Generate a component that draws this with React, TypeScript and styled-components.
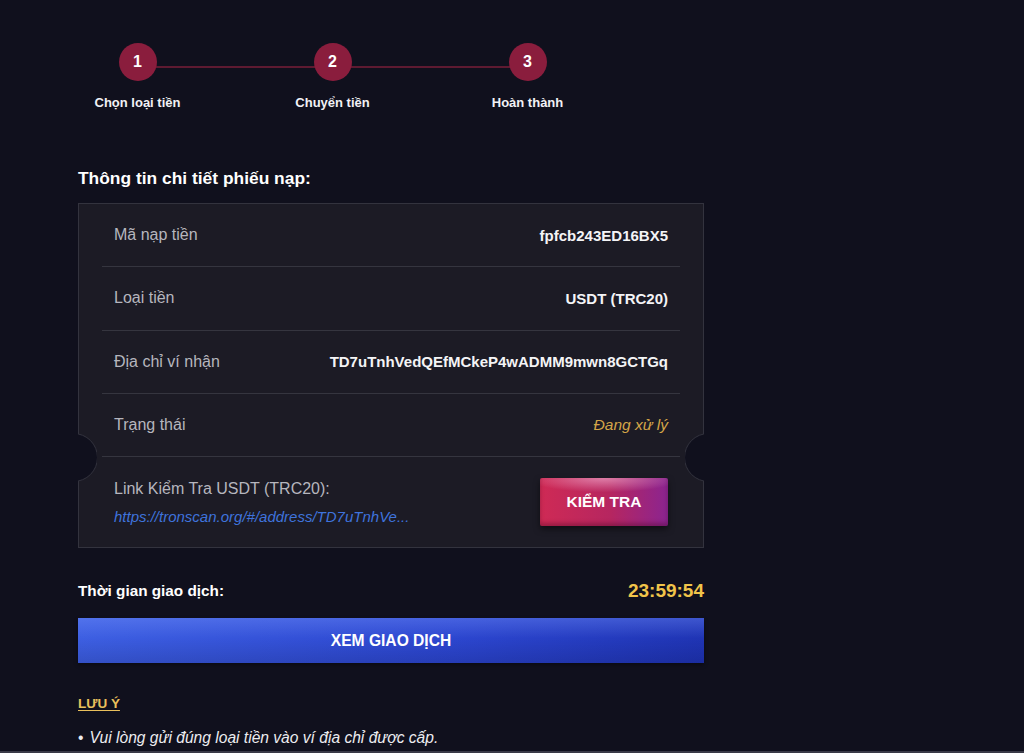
import styled, { createGlobalStyle } from "styled-components";

const GlobalStyle = createGlobalStyle`
  html, body {
    margin: 0;
    padding: 0;
    background: #10101d;
    color: #ffffff;
    font-family: "Liberation Sans", Arial, Helvetica, sans-serif;
  }
  * {
    box-sizing: border-box;
  }
`;

const Page = styled.div`
  min-height: 753px;
  padding: 43px 0 0 78px;
`;

const Column = styled.div`
  width: 626px;
`;

const Stepper = styled.div`
  display: grid;
  grid-template-columns: repeat(3, 195px);
  margin-left: -38px;
`;

const Step = styled.div<{ $last?: boolean }>`
  position: relative;
  display: flex;
  flex-direction: column;
  align-items: center;
  &::after {
    content: "";
    display: ${(p) => (p.$last ? "none" : "block")};
    position: absolute;
    top: 23px;
    left: 50%;
    width: 100%;
    height: 2px;
    background: #5e1a31;
  }
`;

const Circle = styled.div`
  position: relative;
  z-index: 1;
  width: 38px;
  height: 38px;
  border-radius: 50%;
  background: #8a1d3d;
  display: flex;
  align-items: center;
  justify-content: center;
  font-size: 16px;
  font-weight: 700;
`;

const StepLabel = styled.div`
  margin-top: 13px;
  font-size: 13px;
  line-height: 17px;
  font-weight: 700;
  color: #f2f2f5;
`;

const Title = styled.h2`
  margin: 56px 0 0;
  font-size: 17.4px;
  line-height: 23px;
  font-weight: 700;
`;

const Card = styled.div`
  position: relative;
  margin-top: 13px;
  padding: 0 23px;
  background: #1c1b25;
  border: 1px solid #33333e;
`;

const Row = styled.div<{ $tall?: boolean }>`
  display: flex;
  align-items: center;
  justify-content: space-between;
  height: ${(p) => (p.$tall ? "90px" : "63.3px")};
  padding: 0 12px;
  border-bottom: ${(p) => (p.$tall ? "none" : "1px solid #35353f")};
`;

const Label = styled.span`
  font-size: 16px;
  color: #b6b6be;
`;

const Value = styled.span<{ $status?: boolean }>`
  font-size: ${(p) => (p.$status ? "15.5px" : "15px")};
  font-weight: ${(p) => (p.$status ? 400 : 700)};
  font-style: ${(p) => (p.$status ? "italic" : "normal")};
  color: ${(p) => (p.$status ? "#d4a548" : "#f4f4f6")};
`;

const LinkBlock = styled.div`
  display: flex;
  flex-direction: column;
  gap: 10px;
`;

const LinkText = styled.a`
  font-size: 15px;
  font-style: italic;
  color: #3f73dc;
  text-decoration: none;
`;

const CheckButton = styled.button`
  width: 128px;
  height: 48px;
  border: none;
  border-radius: 2px;
  color: #fff;
  font-family: inherit;
  font-size: 15.5px;
  font-weight: 700;
  background:
    radial-gradient(ellipse 60% 30% at 50% 0%, rgba(255, 200, 230, 0.55), transparent 100%),
    linear-gradient(90deg, #cf2a55 0%, #b62660 55%, #8b2490 100%);
  box-shadow: 0 3px 6px rgba(0, 0, 0, 0.5), inset 0 -3px 4px rgba(60, 0, 30, 0.35);
`;

const Notch = styled.div<{ $side: "left" | "right" }>`
  position: absolute;
  top: 228px;
  ${(p) => p.$side}: -1px;
  width: 19px;
  height: 50px;
  overflow: hidden;
  &::before {
    content: "";
    position: absolute;
    top: 1px;
    ${(p) => p.$side}: -29px;
    width: 47px;
    height: 47px;
    border-radius: 50%;
    background: #10101d;
    border: 1px solid #33333e;
  }
`;

const TimerRow = styled.div`
  display: flex;
  justify-content: space-between;
  align-items: center;
  margin-top: 31px;
  height: 24px;
`;

const TimerLabel = styled.span`
  font-size: 15.3px;
  font-weight: 700;
`;

const Timer = styled.span`
  font-size: 19px;
  font-weight: 700;
  color: #f1c44a;
`;

const ViewButton = styled.button`
  display: block;
  width: 100%;
  height: 45px;
  margin-top: 15px;
  border: none;
  color: #fff;
  font-family: inherit;
  font-size: 15.6px;
  font-weight: 700;
  background:
    linear-gradient(180deg, rgba(120, 150, 255, 0.35) 0%, rgba(120, 150, 255, 0) 45%, rgba(0, 0, 40, 0.15) 100%),
    linear-gradient(90deg, #3d5fe2 0%, #2c46cf 60%, #1f34b4 100%);
  box-shadow: 0 2px 4px rgba(0, 0, 0, 0.4);
`;

const NoteTitle = styled.div`
  margin-top: 32px;
  font-size: 13.5px;
  line-height: 18px;
  font-weight: 700;
  color: #e9c05c;
  text-decoration: underline;
  text-underline-offset: 2px;
`;

const NoteList = styled.ul`
  margin: 15px 0 0;
  padding: 0;
  list-style: none;
`;

const NoteItem = styled.li`
  font-size: 15.6px;
  line-height: 20px;
  font-style: italic;
  color: #ececf0;
  &::before {
    content: "•";
    font-style: normal;
    margin-right: 6px;
  }
`;

const BottomBar = styled.div`
  position: fixed;
  left: 0;
  right: 0;
  bottom: 0;
  height: 2px;
  background: #3a3a47;
`;

const steps = ["Chọn loại tiền", "Chuyển tiền", "Hoàn thành"];

const details = [
  { label: "Mã nạp tiền", value: "fpfcb243ED16BX5" },
  { label: "Loại tiền", value: "USDT (TRC20)" },
  { label: "Địa chỉ ví nhận", value: "TD7uTnhVedQEfMCkeP4wADMM9mwn8GCTGq" },
];

export default function App() {
  return (
    <>
      <GlobalStyle />
      <Page>
        <Column>
          <Stepper>
            {steps.map((s, i) => (
              <Step key={s} $last={i === steps.length - 1}>
                <Circle>{i + 1}</Circle>
                <StepLabel>{s}</StepLabel>
              </Step>
            ))}
          </Stepper>

          <Title>Thông tin chi tiết phiếu nạp:</Title>

          <Card>
            {details.map((d) => (
              <Row key={d.label}>
                <Label>{d.label}</Label>
                <Value>{d.value}</Value>
              </Row>
            ))}
            <Row>
              <Label>Trạng thái</Label>
              <Value $status>Đang xử lý</Value>
            </Row>
            <Row $tall>
              <LinkBlock>
                <Label>Link Kiểm Tra USDT (TRC20):</Label>
                <LinkText href="#">https://tronscan.org/#/address/TD7uTnhVe...</LinkText>
              </LinkBlock>
              <CheckButton>KIỂM TRA</CheckButton>
            </Row>
            <Notch $side="left" />
            <Notch $side="right" />
          </Card>

          <TimerRow>
            <TimerLabel>Thời gian giao dịch:</TimerLabel>
            <Timer>23:59:54</Timer>
          </TimerRow>

          <ViewButton>XEM GIAO DỊCH</ViewButton>

          <NoteTitle>LƯU Ý</NoteTitle>
          <NoteList>
            <NoteItem>Vui lòng gửi đúng loại tiền vào ví địa chỉ được cấp.</NoteItem>
          </NoteList>
        </Column>
      </Page>
      <BottomBar />
    </>
  );
}
